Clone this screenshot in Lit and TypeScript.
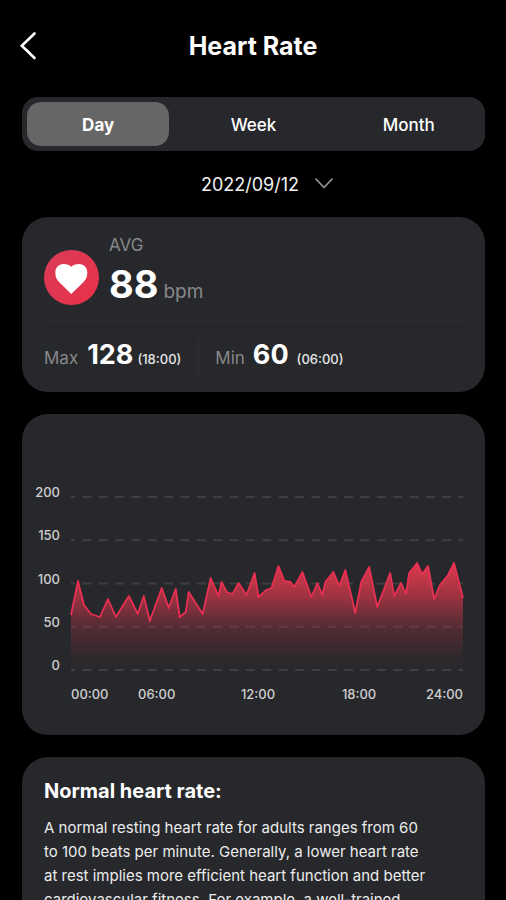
import { LitElement, html, svg, css } from "lit";
import { customElement, property, state } from "lit/decorators.js";
import { classMap } from "lit/directives/class-map.js";

type Point = [number, number];

const PLOT_WIDTH = 393;
const PLOT_HEIGHT = 173;
const GRID_ROWS = [200, 150, 100, 50, 0];
const HOURS = ["00:00", "06:00", "12:00", "18:00", "24:00"];

// Trace of the day: distance from the left edge, height above the zero line.
const TRACE: Point[] = [
  [0, 55], [7, 89], [13, 65], [20, 56], [29, 53], [37, 71], [45, 53], [58, 74],
  [67, 56], [73, 74], [79, 49], [91, 82], [98, 62], [105, 81], [109, 53], [115, 58],
  [118, 78], [125, 67], [132, 56], [140, 92], [148, 74], [151, 88], [156, 78],
  [162, 76], [168, 87], [176, 75], [184, 97], [188, 73], [196, 80], [201, 82],
  [208, 104], [214, 89], [220, 88], [224, 83], [232, 98], [241, 73], [247, 87],
  [252, 75], [255, 88], [263, 98], [269, 84], [275, 100], [285, 57], [291, 88],
  [299, 103], [307, 63], [320, 97], [324, 74], [331, 87], [336, 76], [339, 97],
  [347, 107], [352, 96], [358, 104], [364, 71], [370, 85], [378, 95], [384, 107],
  [393, 72],
];

@customElement("heart-chart")
export class HeartChart extends LitElement {
  @property({ attribute: false }) trace: Point[] = [];

  static styles = css`
    :host {
      display: block;
    }
    .chart {
      display: grid;
      grid-template-columns: 25px 1fr;
      column-gap: 11px;
      font-size: 13px;
      line-height: 16px;
      font-weight: 500;
      color: #cfcfd1;
    }
    .scale {
      display: flex;
      flex-direction: column;
      justify-content: space-between;
      margin: -13px 0 -3px;
      text-align: right;
    }
    .plot {
      display: block;
      width: 100%;
      height: 173px;
      overflow: visible;
    }
    .hours {
      grid-column: 2;
      display: grid;
      grid-template-columns: 67fr 103fr 101fr 84fr auto;
      margin-top: 16px;
    }
  `;

  render() {
    const line = this.trace.map(([x, h]) => `${x},${PLOT_HEIGHT - h}`).join(" ");
    const area = `0,${PLOT_HEIGHT} ${line} ${PLOT_WIDTH},${PLOT_HEIGHT}`;
    return html`
      <div class="chart">
        <div class="scale">${GRID_ROWS.map((v) => html`<span>${v}</span>`)}</div>
        <svg
          class="plot"
          viewBox="0 0 ${PLOT_WIDTH} ${PLOT_HEIGHT}"
          preserveAspectRatio="none"
          role="img"
          aria-label="Heart rate over the day"
        >
          <defs>
            <linearGradient id="fade" gradientUnits="userSpaceOnUse" x1="0" y1="62" x2="0" y2="173">
              <stop offset="0" stop-color="#ee3a50" stop-opacity="0.98" />
              <stop offset="0.35" stop-color="#d8384c" stop-opacity="0.65" />
              <stop offset="0.65" stop-color="#b03445" stop-opacity="0.28" />
              <stop offset="0.9" stop-color="#a83244" stop-opacity="0.06" />
              <stop offset="1" stop-color="#a83244" stop-opacity="0.02" />
            </linearGradient>
          </defs>
          ${GRID_ROWS.map((v) => {
            const y = PLOT_HEIGHT - (v / 200) * PLOT_HEIGHT;
            return svg`<line x1="0" x2=${PLOT_WIDTH} y1=${y} y2=${y} stroke="#3e3f41"
              stroke-width="2" stroke-dasharray="9 7.4" stroke-dashoffset="5" />`;
          })}
          <polygon points=${area} fill="url(#fade)" />
          <polyline points=${line} fill="none" stroke="#e92f52" stroke-width="1.8" stroke-linejoin="round" />
        </svg>
        <div class="hours">${HOURS.map((h) => html`<span>${h}</span>`)}</div>
      </div>
    `;
  }
}

@customElement("app-root")
export class AppRoot extends LitElement {
  @state() private range = "Day";

  static styles = css`
    :host {
      display: block;
      box-sizing: border-box;
      height: 100vh;
      overflow-y: auto;
      scrollbar-width: none;
      background: #000;
      color: #fff;
      font-family: Inter, "Liberation Sans", sans-serif;
    }
    button {
      font: inherit;
      color: inherit;
      background: none;
      border: 0;
      padding: 0;
      cursor: pointer;
    }
    h1,
    h2,
    p {
      margin: 0;
    }
    .top {
      display: grid;
      grid-template-columns: 40px 1fr 40px;
      align-items: center;
      padding: 26px 16px 0;
      height: 40px;
    }
    .back {
      display: flex;
      height: 40px;
      align-items: center;
    }
    .title {
      text-align: center;
      font-size: 25px;
      line-height: 40px;
      font-weight: 700;
    }
    .content {
      display: flex;
      flex-direction: column;
      padding: 31px 21px 22px 22px;
    }
    .tabs {
      display: grid;
      grid-template-columns: repeat(3, 1fr);
      gap: 13px;
      padding: 5px;
      border-radius: 16px;
      background: #27282b;
    }
    .tab {
      height: 44px;
      padding-top: 2px;
      border-radius: 14px;
      font-size: 17px;
      font-weight: 500;
    }
    .tab.active {
      background: #666;
      font-weight: 700;
    }
    .date {
      display: flex;
      align-items: center;
      justify-content: center;
      gap: 16px;
      align-self: center;
      height: 66px;
      padding-left: 27px;
      font-size: 18px;
      color: #f2f2f2;
    }
    .cards {
      display: flex;
      flex-direction: column;
      gap: 22px;
    }
    .card {
      border-radius: 26px;
      background: #27282b;
      padding: 0 22px;
    }
    .average {
      display: flex;
      align-items: flex-start;
      gap: 10px;
      padding-top: 16px;
      height: 88px;
      border-bottom: 1px solid #2f3033;
    }
    .heart {
      margin-top: 17px;
    }
    .label {
      color: #87888a;
      font-size: 17px;
      line-height: 24px;
    }
    .reading {
      display: flex;
      align-items: baseline;
      gap: 5px;
      line-height: 54px;
    }
    .big {
      font-size: 38px;
      font-weight: 700;
    }
    .unit {
      font-size: 19px;
      color: #87888a;
    }
    .extremes {
      display: flex;
      align-items: center;
      height: 70px;
    }
    .extreme {
      display: flex;
      align-items: baseline;
      line-height: 34px;
    }
    .extreme + .extreme {
      margin-left: 17px;
      padding-left: 16px;
      border-left: 1px solid #303134;
    }
    .value {
      font-size: 27px;
      font-weight: 700;
      margin: 0 4px 0 9px;
    }
    .min .value {
      margin: 0 8px;
    }
    .time {
      font-size: 13px;
      font-weight: 500;
      color: #e6e6e6;
    }
    .chart-card {
      padding: 83px 22px 33px 13px;
    }
    .about {
      padding: 19px 22px 24px;
    }
    .heading {
      font-size: 20px;
      line-height: 30px;
      font-weight: 700;
    }
    .text {
      max-width: 382px;
      margin-top: 10px;
      font-size: 15px;
      line-height: 24px;
      color: #ececed;
    }
  `;

  render() {
    return html`
      <header class="top">
        <button class="back" aria-label="Back">
          <svg width="24" height="32" viewBox="0 0 24 32" fill="none" stroke="#fff" stroke-width="2.6"
            stroke-linecap="round" stroke-linejoin="miter">
            <path d="M18.500 3.500 L5.800 15.800 L18.500 28" />
          </svg>
        </button>
        <h1 class="title">Heart Rate</h1>
      </header>
      <main class="content">
        <nav class="tabs" aria-label="Range">
          ${["Day", "Week", "Month"].map(
            (r) => html`<button
              class=${classMap({ tab: true, active: r === this.range })}
              aria-pressed=${r === this.range}
              @click=${() => (this.range = r)}
            >${r}</button>`
          )}
        </nav>
        <button class="date" aria-haspopup="dialog">
          2022/09/12
          <svg width="18" height="12" viewBox="0 0 18 12" fill="none" stroke="#8e8e90" stroke-width="1.7">
            <path d="M0.5 0.500 L9 9.500 L17.5 0.500" />
          </svg>
        </button>
        <div class="cards">
          <section class="card" aria-label="Summary">
            <div class="average">
              <svg class="heart" width="55" height="55" viewBox="0 0 55 55">
                <defs>
                  <linearGradient id="disc" x1="0" y1="0" x2="1" y2="1">
                    <stop offset="0" stop-color="#d93c58" />
                    <stop offset="1" stop-color="#ea3049" />
                  </linearGradient>
                </defs>
                <circle cx="27.5" cy="27.5" r="27.5" fill="url(#disc)" />
                <path fill="#fff" d="M27.3 44 L15.5 32.500 C12.500 29.500 11.300 26.500 11.300 22.500
                  C11.300 18 14.500 14 19.500 14 C23 14 25.500 15 27.300 16.800
                  C29.100 15 31.600 14 35.100 14 C40.100 14 43.300 18 43.300 22.500
                  C43.300 26.500 42.100 29.500 39.100 32.500 Z" />
              </svg>
              <div>
                <div class="label">AVG</div>
                <div class="reading"><span class="big">88</span><span class="unit">bpm</span></div>
              </div>
            </div>
            <div class="extremes">
              <div class="extreme">
                <span class="label">Max</span><span class="value">128</span><span class="time">(18:00)</span>
              </div>
              <div class="extreme min">
                <span class="label">Min</span><span class="value">60</span><span class="time">(06:00)</span>
              </div>
            </div>
          </section>
          <section class="card chart-card">
            <heart-chart .trace=${TRACE}></heart-chart>
          </section>
          <section class="card about">
            <h2 class="heading">Normal heart rate:</h2>
            <p class="text">
              A normal resting heart rate for adults ranges from 60 to 100 beats per minute.
              Generally, a lower heart rate at rest implies more efficient heart function and
              better cardiovascular fitness. For example, a well-trained
            </p>
          </section>
        </div>
      </main>
    `;
  }
}
